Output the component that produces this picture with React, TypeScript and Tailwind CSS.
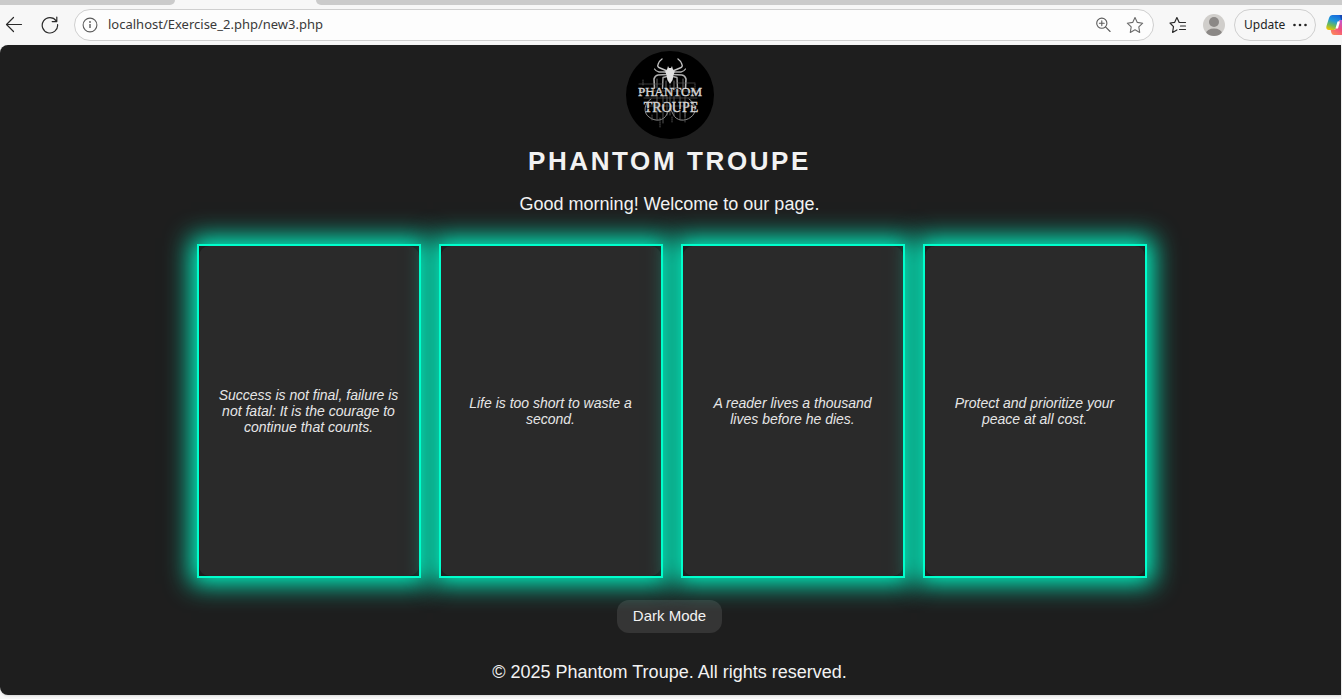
import { useState } from 'react';

const quotes = [
  'Success is not final, failure is not fatal: It is the courage to continue that counts.',
  'Life is too short to waste a second.',
  'A reader lives a thousand lives before he dies.',
  'Protect and prioritize your peace at all cost.',
];

function BackIcon() {
  return (
    <svg width="18" height="18" viewBox="0 0 18 18" fill="none" stroke="#2b2b2b" strokeWidth="1.2" strokeLinecap="round" strokeLinejoin="round" aria-hidden="true">
      <path d="M16.500 8.500H1.500M8.500 1.500l-7 7 7 7" />
    </svg>
  );
}

function ReloadIcon() {
  return (
    <svg width="18" height="18" viewBox="0 0 18 18" fill="none" stroke="#2b2b2b" strokeWidth="1.2" strokeLinecap="round" strokeLinejoin="round" aria-hidden="true">
      <path d="M16.6 8.6A7.7 7.7 0 1 1 15.2 4.8M15.8 1v4.6h-4.6" />
    </svg>
  );
}

function InfoIcon() {
  return (
    <svg width="16" height="16" viewBox="0 0 16 16" fill="none" stroke="#5c5c5c" strokeWidth="1.1" aria-hidden="true">
      <circle cx="8" cy="8" r="6.9" />
      <path d="M8 7v4" strokeWidth="1.4" />
      <circle cx="8" cy="5" r="0.9" fill="#5c5c5c" stroke="none" />
    </svg>
  );
}

function ZoomIcon() {
  return (
    <svg width="16" height="16" viewBox="0 0 16 16" fill="none" stroke="#5c5c5c" strokeWidth="1.1" strokeLinecap="round" aria-hidden="true">
      <circle cx="6.8" cy="6.2" r="5.1" />
      <path d="M10.5 9.9l4.6 4.6M6.8 3.8v4.8M4.4 6.2h4.8" />
    </svg>
  );
}

function StarIcon() {
  return (
    <svg width="18" height="18" viewBox="0 0 18 18" fill="none" stroke="#6a6a6a" strokeWidth="1.1" strokeLinejoin="round" aria-hidden="true">
      <path d="M9 1.500l2.300 4.900 5.400.8-3.900 3.700.9 5.500L9 13.800l-4.700 2.600.9-5.500L1.300 7.200l5.400-.8z" />
    </svg>
  );
}

function FavoritesIcon() {
  return (
    <svg width="18" height="18" viewBox="0 0 18 18" fill="none" stroke="#2b2b2b" strokeWidth="1.2" strokeLinecap="round" strokeLinejoin="round" aria-hidden="true">
      <path d="M16.500 6.500H10.200L7.900 1.500 5.700 6.300 1 7l3.500 3.700-.9 5.700 4.300-2.500M11.500 10H16.500M10.500 13.500H16.500" />
    </svg>
  );
}

function AvatarIcon() {
  return (
    <svg width="22" height="22" viewBox="0 0 22 22" aria-hidden="true">
      <clipPath id="avatar"><circle cx="11" cy="11" r="11" /></clipPath>
      <g clipPath="url(#avatar)">
        <rect width="22" height="22" fill="#d0cecb" />
        <circle cx="11" cy="8" r="5" fill="#8b8886" />
        <ellipse cx="11" cy="19.500" rx="8" ry="5" fill="#8b8886" />
      </g>
    </svg>
  );
}

function CopilotIcon() {
  return (
    <svg width="24" height="22" viewBox="0 0 24 22" aria-hidden="true">
      <defs>
        <linearGradient id="cool" x1="0.6" y1="0" x2="0.2" y2="1">
          <stop offset="0" stopColor="#1769dd" />
          <stop offset="0.4" stopColor="#2099d8" />
          <stop offset="0.7" stopColor="#6fba56" />
          <stop offset="1" stopColor="#f2c600" />
        </linearGradient>
        <linearGradient id="warm" x1="0.8" y1="0" x2="0" y2="1">
          <stop offset="0" stopColor="#b25ae8" />
          <stop offset="0.5" stopColor="#f04e82" />
          <stop offset="1" stopColor="#ff9150" />
        </linearGradient>
      </defs>
      <path d="M6.500 1h8q2 0 2.600 2l.8 3h-3q-2 0-2.500 2l-1.500 5q-.8 3-3 3H3q-3.500 0-2.500-4L3 4q1-3 3.500-3z" fill="url(#cool)" />
      <path d="M14.500 6H20q4 0 3 4l-2 7.500q-1 3.500-4 3.500H8q-2 0-2.600-2L4.700 16H8q2 0 2.800-2.800l1.700-5.400q.5-1.800 2-1.800z" fill="url(#warm)" />
      <path d="M13.500 1h2q1.500 0 2 2l.8 3h-3z" fill="#1748b3" />
      <path d="M11.500 7.500h2.500l-2 7H9.500z" fill="#fff" />
    </svg>
  );
}

function Logo() {
  return (
    <svg className="size-22" viewBox="0 0 88 88" role="img" aria-label="Phantom Troupe logo">
      <circle cx="44" cy="44" r="44" fill="#000" />
      <g fill="none" strokeLinecap="round" strokeLinejoin="round">
        <path d="M40 19.500l-6-2.500q-3-1-2-3.500 1-3.500 4-5.500M48 19.500l6-2.500q3-1 2-3.500-1-3.500-4-5.500" stroke="#c4c4c4" strokeWidth="1.400" />
        <path d="M40 21h-7q-3-.5-4.500-3M48 21h7q3-.5 4.500-3" stroke="#b0b0b0" strokeWidth="1.300" />
        <path d="M41 23.500l-9 .5q-3 .5-4 4l.5 9M47 23.500l9 .5q3 .5 4 4l-.5 9" stroke="#b0b0b0" strokeWidth="1.600" />
        <path d="M41 25.500l-4 1-.5 11M47 25.500l4 1 .5 11" stroke="#a8a8a8" strokeWidth="1.400" />
        <path d="M31 28v9M40 30v8M48 30v8M57 28v9" stroke="#777" strokeWidth="0.900" />
        <path d="M25 48c-7 4-8 14-2 18 6 5 15 4 18-3l3-6 3 6c3 7 12 8 18 3 6-4 5-14-2-18" stroke="#8b8b8b" />
        <path d="M31 46v23M37 45v27M41 46v18M44 34v30M48 45v20M54 44v25M59 46v20" stroke="#686868" strokeWidth="0.800" />
        <path d="M13 33h24M50 32h19M14 40h60M18 47h53M20 55h50" stroke="#555" strokeWidth="0.700" />
        <path d="M17 29v6M26 64v6M34 67v9M46 66v6M69 33v5M59 62v9" stroke="#606060" strokeWidth="0.800" strokeDasharray="1 1" />
      </g>
      <path d="M42 15l1 2h2l1-2 .8 3 2 2.500-1.300 3.500-.9 5-2.600 4-2.600-4-.9-5-1.300-3.500 2-2.500z" fill="#e0e0e0" />
      <g fill="#d4d4d4" stroke="#d4d4d4" strokeWidth="0.400" fontFamily="Liberation Serif, serif" textAnchor="middle">
        <text x="44" y="45" fontSize="13">PHANTOM</text>
        <text x="45" y="61" fontSize="14">TROUPE</text>
      </g>
      <path d="M13 43l4-1M22 38l5 1M33 44l3-2M48 37l5 1M62 43l5-1M20 58l5-1M35 52l4 1M52 59l5-1M63 53l4 1" stroke="#000" strokeWidth="0.700" fill="none" />
    </svg>
  );
}

function BrowserBar() {
  return (
    <header className="font-['Noto_Sans',sans-serif] text-[#242424]">
      <div className="flex h-[5px] bg-[#f7f7f7]">
        <div className="w-[175px] rounded-br-md bg-[#cbcbcb]" />
        <div className="w-[141px]" />
        <div className="flex-1 rounded-bl-md bg-[#cbcbcb]" />
      </div>
      <div className="flex h-10 items-center overflow-hidden pl-[5px]">
        <button aria-label="Back" className="mr-[18px]"><BackIcon /></button>
        <button aria-label="Refresh" className="mr-[15px]"><ReloadIcon /></button>
        <div className="flex h-8 min-w-0 flex-1 items-center rounded-full border border-[#cfcfcf] bg-[#fdfdfd] pr-[9px] pl-[7px]">
          <button aria-label="View site information"><InfoIcon /></button>
          <input
            aria-label="Address"
            defaultValue="localhost/Exercise_2.php/new3.php"
            className="ml-2.5 min-w-0 flex-1 bg-transparent text-[13px] text-[#3a3a3a] outline-none"
          />
          <button aria-label="Zoom"><ZoomIcon /></button>
          <button aria-label="Add to favorites" className="ml-[15px]"><StarIcon /></button>
        </div>
        <button aria-label="Favorites" className="ml-[15px]"><FavoritesIcon /></button>
        <button aria-label="Profile" className="ml-4"><AvatarIcon /></button>
        <button className="ml-[9px] flex h-8 w-[82px] shrink-0 items-center justify-between rounded-full border border-[#cfcfcf] pr-2 pl-[9px] text-xs">
          Update
          <svg width="14" height="4" viewBox="0 0 14 4" fill="#242424" aria-hidden="true">
            <circle cx="1.500" cy="2" r="1.300" /><circle cx="7" cy="2" r="1.300" /><circle cx="12.500" cy="2" r="1.300" />
          </svg>
        </button>
        <button aria-label="Copilot" className="-mr-2 ml-[10px] shrink-0"><CopilotIcon /></button>
      </div>
    </header>
  );
}

export default function App() {
  const [dark, setDark] = useState(true);
  return (
    <div className="flex min-h-screen flex-col bg-[#f7f7f7] pb-1">
      <BrowserBar />
      <main
        className={`mr-px flex flex-1 flex-col items-center rounded-l-lg pt-1.5 pr-0.5 pb-2.5 font-['Liberation_Sans',Arial,sans-serif] shadow-sm ${
          dark ? 'bg-[#1e1e1e] text-[#f2f2f2]' : 'bg-[#f2f2f2] text-[#1e1e1e]'
        }`}
      >
        <Logo />
        <h1 className="mt-1 text-[26px] leading-9 font-bold tracking-widest">PHANTOM TROUPE</h1>
        <p className="mt-[13px] text-lg leading-6">Good morning! Welcome to our page.</p>
        <section className="mt-7 flex flex-wrap justify-center gap-[18px] pl-1">
          {quotes.map((quote) => (
            <article
              key={quote}
              className="flex h-[334px] w-56 border-2 border-[#00ffcc] bg-[#1e1e1e] text-center text-[#e6e6e6] shadow-[0_0_24px_6px_#00ffcc]"
            >
              <div className="flex w-full items-center rounded-[10px] bg-[#2a2a2a] px-4">
                <p className="w-full text-sm leading-4 italic">{quote}</p>
              </div>
            </article>
          ))}
        </section>
        <button
          onClick={() => setDark(!dark)}
          className="mt-[22px] h-[33px] rounded-xl bg-white/10 px-4 text-[15px]"
        >
          Dark Mode
        </button>
        <p className="mt-[27px] text-lg leading-6">© 2025 Phantom Troupe. All rights reserved.</p>
      </main>
    </div>
  );
}
